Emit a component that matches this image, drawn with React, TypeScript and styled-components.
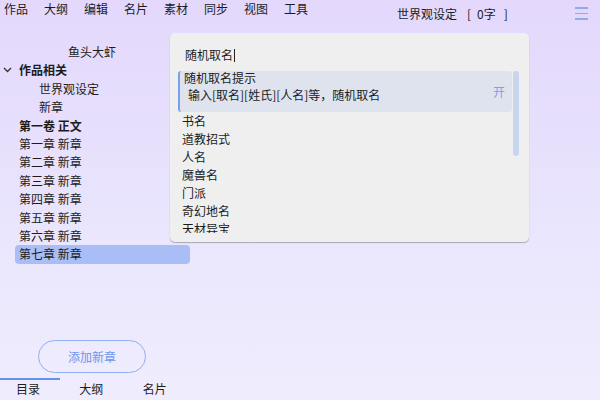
import React from 'react';
import styled, { createGlobalStyle } from 'styled-components';

const GlobalStyle = createGlobalStyle`
  html, body {
    margin: 0;
    padding: 0;
  }
  body {
    width: 600px;
    height: 400px;
    overflow: hidden;
    font-family: "Noto Sans CJK SC", "Noto Sans", sans-serif;
    font-size: 12px;
    color: #1c1c1c;
    background: linear-gradient(180deg, #e3d8fc 0%, #eae6fd 60%, #efedfd 100%);
  }
`;

const Page = styled.div`
  position: relative;
  width: 600px;
  height: 400px;
  display: flex;
  flex-direction: column;
`;

const Header = styled.div`
  height: 43px;
  flex-shrink: 0;
  display: flex;
  align-items: flex-start;
`;

const Menu = styled.div`
  display: flex;
  padding: 1px 0 0 4px;
`;

const MenuItem = styled.span`
  width: 40px;
  line-height: 16px;
`;

const DocTitle = styled.div`
  display: flex;
  width: 114px;
  margin: 6px 0 0 73px;
  line-height: 16px;
`;

const Bracket = styled.span<{ $gap: number }>`
  margin-left: ${({ $gap }) => $gap}px;
`;

const MenuIcon = styled.div`
  margin: 7px 0 0 64px;
  width: 13px;
  display: flex;
  flex-direction: column;
  gap: 4px;
  span {
    height: 1.5px;
    background: #8eaaf0;
  }
`;

const Body = styled.div`
  flex: 1;
  display: flex;
`;

const Sidebar = styled.div`
  width: 190px;
  display: flex;
  flex-direction: column;
`;

const BookName = styled.div`
  height: 18.4px;
  line-height: 18.4px;
  text-align: center;
  padding-right: 6px;
`;

const TreeRow = styled.div<{ $indent: number; $bold?: boolean; $selected?: boolean }>`
  position: relative;
  height: 18.4px;
  line-height: 18.4px;
  margin-left: 15px;
  padding-left: ${({ $indent }) => 4 + $indent * 20}px;
  font-weight: ${({ $bold }) => ($bold ? 700 : 400)};
  border-radius: 4px;
  background: ${({ $selected }) => ($selected ? '#a9bdf6' : 'transparent')};
`;

const Chevron = styled.svg`
  position: absolute;
  left: -12px;
  top: 6px;
`;

const Spacer = styled.div`
  flex: 1;
`;

const AddButton = styled.button`
  margin: 0 0 5px 38px;
  width: 108px;
  height: 33px;
  border: 1px solid #8fb0f2;
  border-radius: 17px;
  background: transparent;
  color: #6f96ea;
  font-family: inherit;
  font-size: 12px;
  padding: 0;
`;

const Tabs = styled.div`
  display: flex;
  height: 22px;
`;

const Tab = styled.div<{ $active?: boolean }>`
  position: relative;
  width: 64.5px;
  padding-left: 16px;
  box-sizing: border-box;
  line-height: 21px;
  &::before {
    content: '';
    position: absolute;
    left: 0;
    top: 0;
    width: 60px;
    height: 2px;
    background: ${({ $active }) => ($active ? '#6592ea' : 'transparent')};
  }
`;

const Popup = styled.div`
  position: absolute;
  left: 170px;
  top: 33px;
  width: 359px;
  height: 209px;
  background: #efefef;
  border-radius: 5px;
  box-shadow: 0 1px 1px rgba(0, 0, 0, 0.28);
  overflow: hidden;
  display: flex;
  flex-direction: column;
`;

const SearchLine = styled.div`
  flex-shrink: 0;
  padding: 13px 0 0 15px;
  height: 25px;
  line-height: 18px;
`;

const Caret = styled.span`
  display: inline-block;
  width: 1px;
  height: 13px;
  background: #222;
  vertical-align: -2px;
  margin-left: 1px;
`;

const ListArea = styled.div`
  position: relative;
  height: 162px;
  flex-shrink: 0;
  overflow: hidden;
  padding: 0 17px 0 8px;
`;

const HintCard = styled.div`
  display: flex;
  height: 41px;
  box-sizing: border-box;
  background: #dee3ee;
  border-radius: 3px;
  border-left: 2px solid #7b9ff0;
  padding: 0 7px 0 4px;
`;

const HintText = styled.div`
  flex: 1;
  line-height: 14px;
`;

const HintSub = styled.div`
  margin-top: 3px;
  padding-left: 4px;
`;

const Toggle = styled.span`
  align-self: center;
  color: #7ba0f2;
  line-height: 14px;
`;

const Item = styled.div`
  height: 18px;
  line-height: 18px;
  padding-left: 4px;
`;

const ScrollThumb = styled.div`
  position: absolute;
  right: 10px;
  top: 0;
  width: 6px;
  height: 85px;
  border-radius: 3px;
  background: #c8d5ee;
`;

const chapters = ['一', '二', '三', '四', '五', '六', '七'];
const names = ['书名', '道教招式', '人名', '魔兽名', '门派', '奇幻地名', '天材异宝'];

export default function App() {
  return (
    <Page>
      <GlobalStyle />
      <Header>
        <Menu>
          {['作品', '大纲', '编辑', '名片', '素材', '同步', '视图', '工具'].map((m) => (
            <MenuItem key={m}>{m}</MenuItem>
          ))}
        </Menu>
        <DocTitle>
          世界观设定
          <Bracket $gap={10}>[</Bracket>
          <Bracket $gap={6}>0字</Bracket>
          <Bracket $gap={8}>]</Bracket>
        </DocTitle>
        <MenuIcon>
          <span />
          <span />
          <span />
        </MenuIcon>
      </Header>
      <Body>
        <Sidebar>
          <BookName>鱼头大虾</BookName>
          <TreeRow $indent={0} $bold>
            <Chevron width="9" height="6" viewBox="0 0 9 6">
              <path d="M1 1l3.5 3.5L8 1" fill="none" stroke="#333" strokeWidth="1.3" />
            </Chevron>
            作品相关
          </TreeRow>
          <TreeRow $indent={1}>世界观设定</TreeRow>
          <TreeRow $indent={1}>新章</TreeRow>
          <TreeRow $indent={0} $bold>
            第一卷 正文
          </TreeRow>
          {chapters.map((c, i) => (
            <TreeRow key={c} $indent={0} $selected={i === chapters.length - 1}>
              第{c}章 新章
            </TreeRow>
          ))}
          <Spacer />
          <AddButton>添加新章</AddButton>
          <Tabs>
            <Tab $active>目录</Tab>
            <Tab>大纲</Tab>
            <Tab>名片</Tab>
          </Tabs>
        </Sidebar>
      </Body>
      <Popup>
        <SearchLine>
          随机取名
          <Caret />
        </SearchLine>
        <ListArea>
          <HintCard>
            <HintText>
              随机取名提示
              <HintSub>输入[取名][姓氏][人名]等，随机取名</HintSub>
            </HintText>
            <Toggle>开</Toggle>
          </HintCard>
          <ScrollThumb />
          {names.map((n) => (
            <Item key={n}>{n}</Item>
          ))}
        </ListArea>
      </Popup>
    </Page>
  );
}
